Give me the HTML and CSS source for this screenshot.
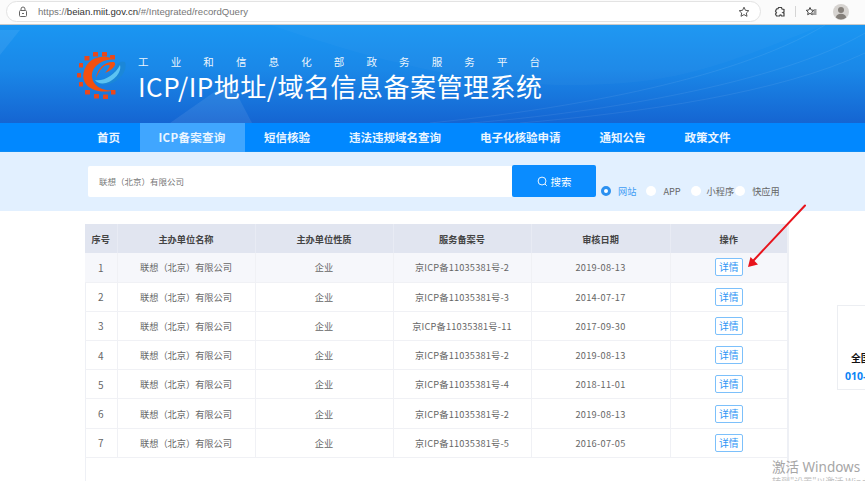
FILE: index.html
```html
<!DOCTYPE html>
<html lang="zh-CN">
<head>
<meta charset="utf-8">
<title>ICP/IP地址/域名信息备案管理系统</title>
<link rel="stylesheet" href="styles.css">
</head>
<body>
<div class="page">
  <div class="browser">
    <div class="address">
      <svg class="lock" viewBox="0 0 12 12" width="12" height="12"><path d="M4 4.500V3a2 2 0 0 1 4 0v1.500" fill="none" stroke="#666" stroke-width="1"/><rect x="2.500" y="4.500" width="7" height="6" rx="1" fill="none" stroke="#666" stroke-width="1"/><rect x="5" y="7" width="2" height="1" fill="#666"/></svg>
      <span class="url"><span class="dim">https://</span>beian.miit.gov.cn<span class="dim">/#/Integrated/recordQuery</span></span>
      <svg class="star" viewBox="0 0 12 12" width="12" height="12"><path d="M6 1.200l1.450 3.100 3.350.4-2.500 2.300.7 3.300L6 8.600l-3 1.700.7-3.300L1.200 4.700l3.350-.4z" fill="none" stroke="#555" stroke-width="1"/></svg>
    </div>
    <div class="tools">
      <svg viewBox="0 0 12 12" width="12" height="12"><path d="M4.500 1.500h3l.5 1.500 2 .5v2.500l-1.200.5 1.200.8v2.700H7.500l-.6-1.100-.9.100-.5 1H2.500l-1-2 1-1.300-1-1.400 1-2.300 1.500-.3z" fill="none" stroke="#444" stroke-width="1.200"/></svg>
      <span class="sep"></span>
      <svg viewBox="0 0 12 12" width="12" height="12"><path d="M5 1.500l1.150 2.500 2.600.3-1.950 1.800.55 2.600L5 7.400 2.650 8.700l.55-2.600L1.250 4.300l2.600-.3z" fill="none" stroke="#444" stroke-width="1"/><path d="M9 4h2.500M8.500 6h3M8 8h3.500" stroke="#444" stroke-width="1"/></svg>
      <svg class="avatar" viewBox="0 0 16 16" width="16" height="16"><circle cx="8" cy="8" r="8" fill="#d6d3d0"/><circle cx="8" cy="6" r="3" fill="#85807b"/><path d="M2.800 13.500a5.300 4.500 0 0 1 10.400 0 8 8 0 0 1-10.400 0z" fill="#85807b"/></svg>
    </div>
  </div>

  <header class="banner">
    <svg class="banner-art" viewBox="0 0 865 98" width="865" height="98" aria-hidden="true">
      <path d="M0 30L20 5H0z" fill="#fff" opacity=".07"/>
      <path d="M170 98l60-42 22 42z" fill="#fff" opacity=".08"/>
      <path d="M270 0c90 30 190 60 300 60S720 40 825 0z" fill="#fff" opacity=".025"/>
      <path d="M430 98c120-12 300-40 395-98M470 98c130-10 310-40 395-90M520 98c120-10 260-30 345-70" fill="none" stroke="#fff" stroke-width="1" opacity=".07"/>
    </svg>
    <svg class="logo" viewBox="0 0 50 50" width="50" height="50" aria-hidden="true">
      <g fill="#e8481c">
        <rect x="16" y="1" width="5" height="4.500" rx=".5"/><rect x="25" y="1" width="5" height="4.500" rx=".5"/>
        <rect x="7.500" y="5" width="5" height="4.500" rx=".5"/><rect x="33" y="4" width="5" height="4.500" rx=".5"/>
        <rect x="2" y="12" width="4" height="4.500" rx=".5"/><rect x="0" y="22" width="4" height="4.500" rx=".5"/>
        <rect x="2" y="31" width="4" height="4.500" rx=".5"/><rect x="8" y="39" width="5" height="4.500" rx=".5"/>
        <rect x="17" y="43" width="5" height="4.500" rx=".5"/><rect x="26" y="43.500" width="5" height="4.500" rx=".5"/>
        <rect x="34" y="39" width="4.500" height="4.500" rx=".5"/>
      </g>
      <path d="M36 8C26 3 10 6 6.500 22 4 36 20 44 38 39 28 41 16 36 15 26 14 16 24 9 36 8z" fill="#f2500f"/>
      <path d="M16 27C22 32 34 26 38 18 40 12 44 9 48 11 51 18 44 30 32 33 24 35 18 32 16 27z" fill="#1b87d8"/>
      <path d="M18 29C26 31 38 24 43 14 45 21 37 30 29 32 24 33 20 32 18 29z" fill="#5cc3f2"/>
      <path d="M19 27C20 18 28 10 37 11 40 13 37 18 28 22 33 16 34 14 31 14 26 14 22 20 19 27z" fill="#f2500f"/>
    </svg>
    <div class="brand">
      <div class="brand-sub"><span>工</span><span>业</span><span>和</span><span>信</span><span>息</span><span>化</span><span>部</span><span>政</span><span>务</span><span>服</span><span>务</span><span>平</span><span>台</span></div>
      <div class="brand-title">ICP/IP地址/域名信息备案管理系统</div>
    </div>
  </header>

  <nav class="nav">
    <a class="nav-item">首页</a>
    <a class="nav-item active">ICP备案查询</a>
    <a class="nav-item">短信核验</a>
    <a class="nav-item">违法违规域名查询</a>
    <a class="nav-item">电子化核验申请</a>
    <a class="nav-item">通知公告</a>
    <a class="nav-item">政策文件</a>
  </nav>

  <section class="search">
    <div class="search-input">联想（北京）有限公司</div>
    <button class="search-btn">
      <svg viewBox="0 0 12 12" width="11" height="11"><circle cx="5.500" cy="5.500" r="4.300" fill="none" stroke="#fff" stroke-width="1"/><path d="M8.700 8.700l2 2" stroke="#fff" stroke-width="1"/></svg>
      搜索
    </button>
    <div class="radios">
      <label class="radio checked"><i></i>网站</label>
      <label class="radio r-app"><i></i>APP</label>
      <label class="radio r-mini"><i></i>小程序</label>
      <label class="radio"><i></i>快应用</label>
    </div>
  </section>

  <main class="content">
    <div class="table-wrap">
      <table class="records">
        <colgroup><col class="c1"><col class="c2"><col class="c3"><col class="c4"><col class="c5"><col class="c6"></colgroup>
        <thead>
          <tr><th>序号</th><th>主办单位名称</th><th>主办单位性质</th><th>服务备案号</th><th>审核日期</th><th>操作</th></tr>
        </thead>
        <tbody>
          <tr class="hover"><td class="num">1</td><td>联想（北京）有限公司</td><td>企业</td><td class="rec">京ICP备11035381号-2</td><td class="date">2019-08-13</td><td><button class="detail">详情</button></td></tr>
          <tr><td class="num">2</td><td>联想（北京）有限公司</td><td>企业</td><td class="rec">京ICP备11035381号-3</td><td class="date">2014-07-17</td><td><button class="detail">详情</button></td></tr>
          <tr><td class="num">3</td><td>联想（北京）有限公司</td><td>企业</td><td class="rec">京ICP备11035381号-11</td><td class="date">2017-09-30</td><td><button class="detail">详情</button></td></tr>
          <tr><td class="num">4</td><td>联想（北京）有限公司</td><td>企业</td><td class="rec">京ICP备11035381号-2</td><td class="date">2019-08-13</td><td><button class="detail">详情</button></td></tr>
          <tr><td class="num">5</td><td>联想（北京）有限公司</td><td>企业</td><td class="rec">京ICP备11035381号-4</td><td class="date">2018-11-01</td><td><button class="detail">详情</button></td></tr>
          <tr><td class="num">6</td><td>联想（北京）有限公司</td><td>企业</td><td class="rec">京ICP备11035381号-2</td><td class="date">2019-08-13</td><td><button class="detail">详情</button></td></tr>
          <tr><td class="num">7</td><td>联想（北京）有限公司</td><td>企业</td><td class="rec">京ICP备11035381号-5</td><td class="date">2016-07-05</td><td><button class="detail">详情</button></td></tr>
        </tbody>
      </table>
    </div>
  </main>

  <svg class="arrow" viewBox="0 0 65 65" width="65" height="65" aria-hidden="true">
    <path d="M61 1.500L9 57" stroke="#e8141c" stroke-width="2" stroke-linecap="round"/>
    <path d="M4 63L6.500 53 14 60.500z" fill="#e8141c"/>
  </svg>

  <aside class="hotline">
    <div class="hot-name">全国</div>
    <div class="hot-num">010-</div>
  </aside>

  <div class="watermark">
    <div class="wm-1">激活 Windows</div>
    <div class="wm-2">转到"设置"以激活 Windows。</div>
  </div>
</div>
</body>
</html>
```

FILE: styles.css
```css
* { box-sizing: border-box; }
html, body { margin: 0; padding: 0; background: #fff; }
body { font-family: "Noto Sans CJK SC", "Noto Sans", sans-serif; }
.page { position: relative; width: 865px; height: 481px; overflow: hidden; background: #fff; }

.browser { height: 25px; display: flex; align-items: flex-start; padding: 1px 0 0 6px; background: #fbfbfb; border-bottom: 1px solid #c9c9c9; }
.address { width: 755px; height: 21px; display: flex; align-items: center; padding: 0 10px 0 10px; background: #fff; border: 1px solid #e3e3e3; border-radius: 11px; }
.lock { flex: none; }
.url { margin-left: 9px; font: 9.600px "Liberation Sans", sans-serif; color: #333; flex: 1; white-space: nowrap; }
.dim { color: #777; }
.tools { display: flex; align-items: center; height: 21px; padding-left: 13px; }
.tools svg { flex: none; }
.sep { width: 1px; height: 11px; background: #d5d5d5; margin: 0 9px; }
.avatar { margin-left: 16px; }

.banner { position: relative; height: 98px; display: flex; align-items: flex-start; padding: 26px 0 0 77px; background: linear-gradient(180deg, #1a96f2 0%, #1a88e8 45%, #1565d2 100%); overflow: hidden; }
.banner-art { position: absolute; left: 0; top: 0; }
.logo { position: relative; flex: none; }
.brand { position: relative; margin-left: 11px; color: #fff; }
.brand-sub { display: flex; width: 402px; justify-content: space-between; font-size: 10.500px; line-height: 14px; padding-top: 4px; opacity: .92; }
.brand-title { font-size: 26px; line-height: 32px; white-space: nowrap; margin-top: 1px; letter-spacing: .5px; }

.nav { height: 29px; display: flex; padding-left: 77.500px; background: #0188ff; border-bottom: 1px solid #0f8df5; }
.nav-item { height: 29px; padding: 0 19.500px; font-size: 11.500px; line-height: 29px; font-weight: 700; color: #eaf5ff; white-space: nowrap; }
.nav-item.active { padding: 0 19px; background: #40a6ff; letter-spacing: .3px; }

.search { height: 59px; display: flex; align-items: flex-start; padding: 13px 0 0 88px; background: #e2f0ff; }
.search-input { width: 424px; height: 31px; margin-top: 1px; padding-left: 11px; background: #fff; border-radius: 2px 0 0 2px; font-size: 8.500px; line-height: 31px; color: #777; }
.search-btn { width: 84px; height: 32px; display: flex; align-items: center; justify-content: center; gap: 3px; padding: 0; background: #0a8cff; border: 0; border-radius: 2px; font: 10.500px "Noto Sans CJK SC", sans-serif; color: #fff; }
.radios { display: flex; align-items: center; height: 14px; margin: 19px 0 0 5px; }
.radio { display: flex; align-items: center; font-size: 9.200px; line-height: 14px; color: #666; margin-right: 8px; }
.radio i { width: 10px; height: 10px; margin-right: 7px; border-radius: 50%; background: #fff; }
.radio.checked { color: #3f9cf5; margin-right: 10px; }
.radio.checked i { background: #fff; border: 3px solid #2b90f0; }
.radio.r-app { margin-right: 10px; }
.radio.r-mini { margin-right: 1px; }
.radio.r-mini i { margin-right: 6px; }

.content { padding: 13px 0 0 85px; }
.table-wrap { width: 704px; height: 300px; border-left: 1px solid #eef0f5; border-right: 2px solid #eef0f5; }
.records { width: 702px; margin-left: -1px; border-collapse: collapse; table-layout: fixed; font-size: 9.200px; color: #666; }
.c1 { width: 32px; } .c2 { width: 138px; } .c3 { width: 138px; } .c4 { width: 138px; } .c5 { width: 139px; } .c6 { width: 117px; }
.records th { height: 29px; padding: 0; background: #e1e5f0; border-right: 1px solid #e8ebf4; font-size: 9.200px; font-weight: 700; color: #444; }
.records th:last-child, .records td:last-child { border-right: 0; }
.records td { height: 29.200px; padding: 0; text-align: center; border-right: 1px solid #f0f1f5; border-bottom: 1px solid #f0f1f5; white-space: nowrap; }
.records td.num { font-size: 10px; }
.records td.rec { letter-spacing: .2px; }
.records td.date { letter-spacing: .3px; }
.records tr.hover td { background: #f6f7fb; }
.detail { display: block; width: 28px; height: 18px; margin: 0 auto; padding: 0; background: #fff; border: 1px solid #7cc0fb; border-radius: 2px; font: 9.800px/16px "Noto Sans CJK SC", sans-serif; color: #2d95f5; }

.arrow { position: absolute; left: 744px; top: 204px; }

.hotline { position: absolute; left: 837px; top: 305px; width: 40px; height: 85px; padding: 45px 0 0 13px; background: #fff; border: 1px solid #eceef2; }
.hot-name { font-size: 9.800px; line-height: 14px; font-weight: 700; color: #111; white-space: nowrap; }
.hot-num { font: 700 10.500px/14px "Noto Sans", sans-serif; color: #0a84f5; margin: 4px 0 0 -6px; white-space: nowrap; }

.watermark { position: absolute; left: 772px; top: 459px; color: #a6a6a6; white-space: nowrap; }
.wm-1 { font-size: 13.500px; line-height: 17px; font-family: "Noto Sans", "Noto Sans CJK SC", sans-serif; }
.wm-2 { font-size: 9px; line-height: 12px; color: #c0c0c0; }
```
